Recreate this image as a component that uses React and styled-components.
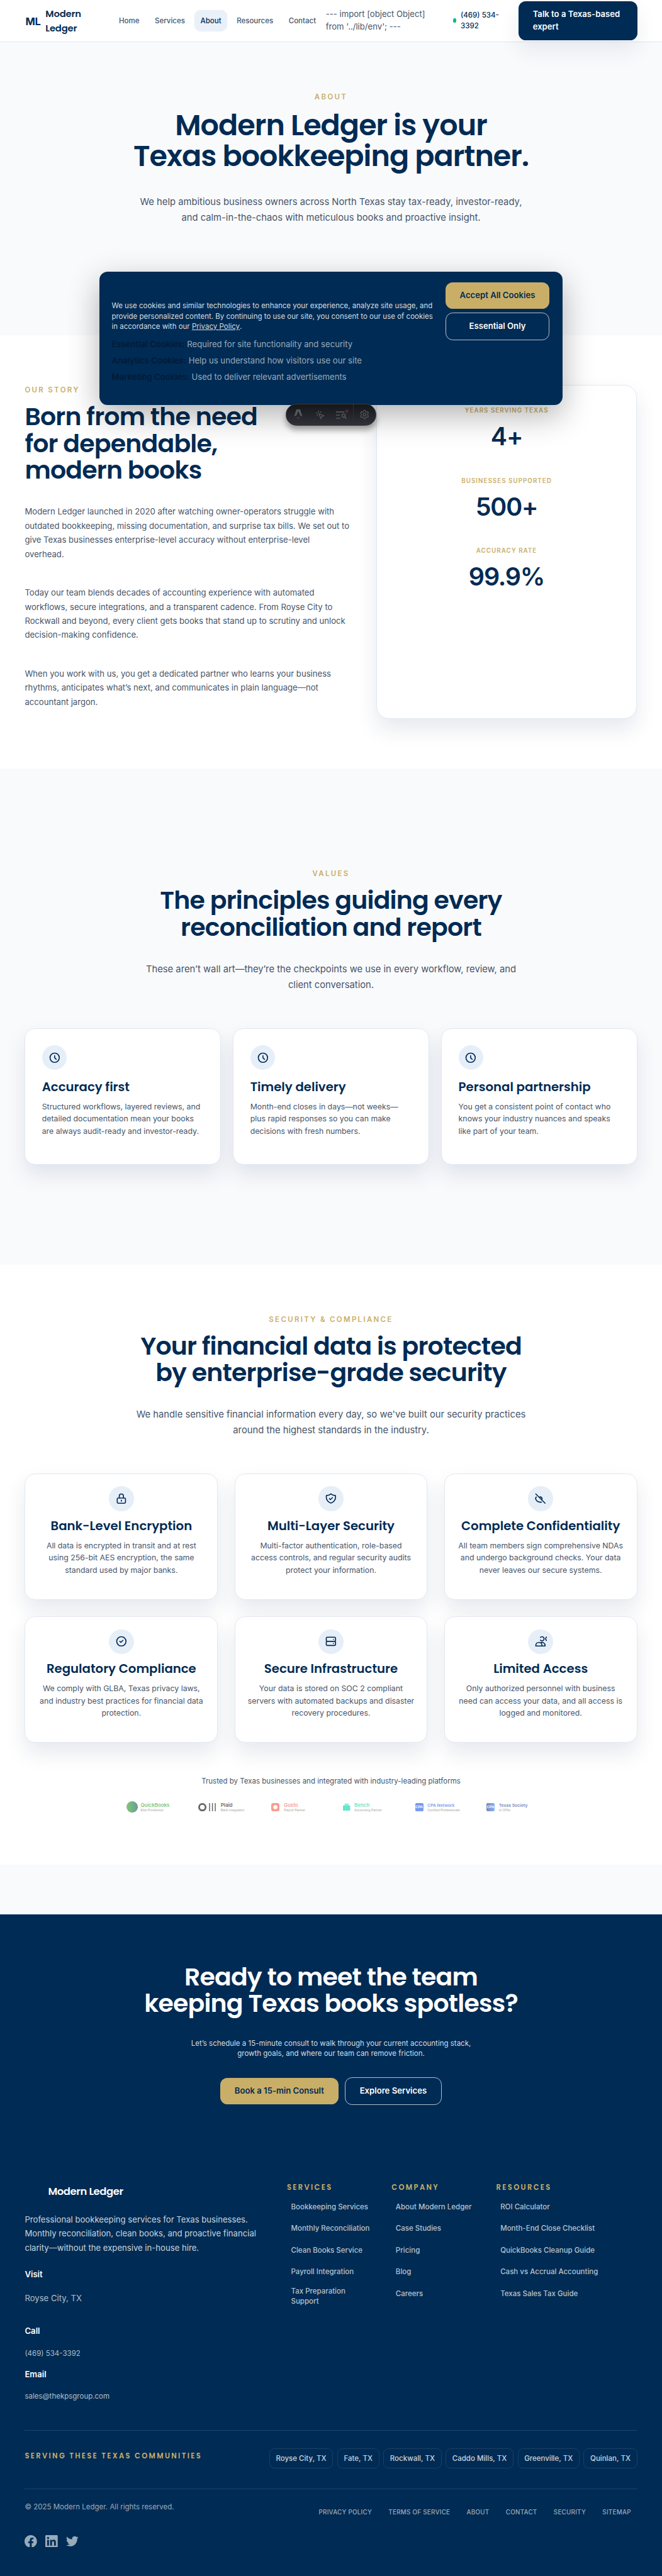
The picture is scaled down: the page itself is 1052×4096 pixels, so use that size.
import React from "react";
import styled, { createGlobalStyle } from "styled-components";
import { MousePointerClick, Settings } from "lucide-react";

const navy = "#002b54";
const gold = "#c9ae68";
const slate = "#475569";
const line = "#e2e8f0";
const mist = "#f9fafc";
const body = `Inter, "Liberation Sans", sans-serif`;
const display = `Poppins, Inter, sans-serif`;

const Global = createGlobalStyle`
  * { box-sizing: border-box; }
  body { margin: 0; background: ${navy}; }
  h1, h2, h3, p, ul { margin: 0; padding: 0; }
  a { color: inherit; text-decoration: none; }
  svg { display: block; flex: none; }
`;

const Page = styled.div`
  position: relative;
  zoom: 0.8215;
  height: 4986px;
  overflow: hidden;
  font-family: ${body};
  font-size: 16px;
  line-height: 24px;
  color: ${slate};
  background: ${mist};
`;

/* Header */
const Header = styled.header`
  display: flex;
  align-items: center;
  height: 81px;
  padding: 0 48px;
  background: #fff;
  border-bottom: 1px solid ${line};
`;
const Brand = styled.a`
  display: flex;
  align-items: center;
  gap: 8px;
  width: 170px;
  color: ${navy};
`;
const Mark = styled.span`
  display: flex;
  align-items: center;
  justify-content: center;
  width: 32px;
  height: 32px;
  padding-top: 3px;
  font: 700 20px/20px ${body};
  letter-spacing: -0.02em;
  border-radius: 8px;
  box-shadow: 0 1px 2px rgba(0, 43, 84, 0.06);
`;
const BrandName = styled.span`
  width: 80px;
  font: 600 18px/28px ${display};
  letter-spacing: -0.01em;
`;
const Nav = styled.nav`
  display: flex;
  gap: 6px;
`;
const NavLink = styled.a`
  padding: 10px 12px;
  font-size: 14px;
  line-height: 20px;
  font-weight: 500;
  border-radius: 12px;
  color: ${(p) => (p.$active ? navy : slate)};
  background: ${(p) => (p.$active ? "#e9f0f9" : "transparent")};
  box-shadow: ${(p) => (p.$active ? "0 1px 2px rgba(0,43,84,.08)" : "none")};
`;
const EnvNote = styled.span`
  flex: none;
  width: 253px;
  padding: 1px 0 0 7px;
  white-space: pre-line;
`;
const Phone = styled.a`
  display: flex;
  align-items: center;
  gap: 8px;
  white-space: pre;
  font-size: 14px;
  line-height: 20px;
  font-weight: 500;
  color: ${navy};
`;
const Dot = styled.i`
  width: 7px;
  height: 8px;
  border-radius: 50%;
  background: #10b981;
`;
const HeaderCta = styled.a`
  flex: none;
  width: 230px;
  margin-left: auto;
  padding: 14px 28px;
  white-space: pre-line;
  font-weight: 600;
  color: #fff;
  background: ${navy};
  border-radius: 14px;
  box-shadow: 0 20px 40px rgba(0, 43, 84, 0.08);
`;

/* Section type */
const Section = styled.section`
  height: ${(p) => p.$h}px;
  padding: ${(p) => p.$top}px 48px 0;
  background: ${(p) => p.$bg};
  text-align: ${(p) => (p.$center ? "center" : "left")};
`;
const Eyebrow = styled.p`
  font-size: 14px;
  line-height: 20px;
  font-weight: 600;
  letter-spacing: 0.2em;
  text-transform: uppercase;
  color: ${gold};
`;
const Title = styled.h1`
  margin-top: 15.5px;
  white-space: pre-line;
  font: 600 56px/58.8px ${display};
  letter-spacing: -0.02em;
  color: ${navy};
`;
const Heading = styled.h2`
  margin-top: ${(p) => p.$mt ?? 16}px;
  white-space: pre-line;
  font: 600 48px/51.8px ${display};
  letter-spacing: -0.02em;
  color: ${(p) => (p.$light ? "#fff" : navy)};
`;
const Lead = styled.p`
  margin-top: ${(p) => p.$mt ?? 40.5}px;
  white-space: pre-line;
  font-size: 18px;
  line-height: 30.6px;
`;

/* Story */
const StoryGrid = styled.div`
  display: grid;
  grid-template-columns: 632px 504px;
  gap: 48px;
  height: 646.6px;
`;
const StoryText = styled.div`
  display: flex;
  flex-direction: column;
  gap: 48px;
  margin-top: 39.5px;
  white-space: pre-line;
  line-height: 27.2px;
`;
const StatCard = styled.aside`
  border: 1px solid ${line};
  border-radius: 24px;
  padding-top: 37.5px;
  background: #fff;
  box-shadow: 0 20px 40px rgba(0, 43, 84, 0.1);
  text-align: center;
`;
const Stat = styled.div`
  height: 136px;
`;
const StatLabel = styled.p`
  font-size: 12px;
  line-height: 20px;
  font-weight: 600;
  letter-spacing: 0.1em;
  color: ${gold};
`;
const StatValue = styled.p`
  margin-top: 2px;
  font-size: 48px;
  line-height: 80px;
  font-weight: 600;
  letter-spacing: -0.03em;
  color: ${navy};
`;

/* Cards */
const CardGrid = styled.div`
  display: grid;
  grid-template-columns: repeat(3, 1fr);
  gap: ${(p) => p.$gap}px;
  margin-top: ${(p) => p.$mt}px;
`;
const Card = styled.article`
  display: flex;
  flex-direction: column;
  align-items: ${(p) => (p.$center ? "center" : "flex-start")};
  text-align: ${(p) => (p.$center ? "center" : "left")};
  height: ${(p) => (p.$center ? 244.5 : 264.3)}px;
  padding: ${(p) => (p.$center ? 24 : 32)}px;
  border: 1px solid ${line};
  border-radius: 20px;
  background: #fff;
  box-shadow: 0 20px 40px rgba(0, 43, 84, 0.1);
`;
const IconDisc = styled.span`
  display: grid;
  place-items: center;
  width: 48px;
  height: 48px;
  border-radius: 50%;
  background: #e6eef8;
  color: ${navy};
`;
const CardTitle = styled.h3`
  margin-top: ${(p) => p.$mt}px;
  font: 600 24px/30px ${display};
  white-space: nowrap;
  color: ${navy};
`;
const CardText = styled.p`
  margin-top: 11px;
  white-space: pre;
  font-size: 15px;
  line-height: 24px;
`;

/* Partners */
const Trusted = styled.p`
  margin-top: 65px;
  font-size: 14px;
  line-height: 20px;
`;
const PartnerRow = styled.div`
  display: grid;
  grid-template-columns: repeat(6, 138.5px);
  justify-content: start;
  margin: 29px 0 0 ${245 - 48}px;
`;
const Partner = styled.div`
  display: flex;
  align-items: center;
  gap: ${(p) => p.$gap}px;
  margin-left: ${(p) => p.$ml ?? 0}px;
  height: 22px;
  text-align: left;
  opacity: 0.6;
`;
const PartnerName = styled.b`
  display: block;
  white-space: nowrap;
  font-size: ${(p) => p.$size}px;
  line-height: 11px;
  font-weight: 600;
  color: ${(p) => p.$color};
`;
const PartnerRole = styled.small`
  display: block;
  white-space: nowrap;
  font: 6.3px/8px "Liberation Sans", sans-serif;
  color: #666;
`;
const CpaBadge = styled.span`
  display: grid;
  place-items: center;
  width: 16px;
  height: 16px;
  border-radius: 2px;
  font: 700 7px/8px "Liberation Sans", sans-serif;
  color: #fff;
  background: ${(p) => p.$bg};
`;

/* Call to action */
const CtaText = styled.p`
  margin-top: 40.500px;
  white-space: pre-line;
  font-size: 14px;
  line-height: 20px;
  color: rgba(255, 255, 255, 0.85);
`;
const ButtonRow = styled.div`
  display: flex;
  align-items: center;
  justify-content: center;
  gap: 12px;
  margin-top: 36px;
`;
const Button = styled.a`
  display: flex;
  align-items: center;
  justify-content: center;
  height: ${(p) => (p.$outline ? 53 : 51.5)}px;
  padding: 0 28px;
  border-radius: 14px;
  font-weight: 600;
  white-space: nowrap;
  color: ${(p) => (p.$outline ? "#fff" : navy)};
  background: ${(p) => (p.$outline ? "transparent" : gold)};
  border: ${(p) => (p.$outline ? "1px solid rgba(255,255,255,.7)" : "0")};
`;

/* Footer */
const Footer = styled.footer`
  height: 806px;
  padding: 43.5px 48px 0;
  background: ${navy};
  color: rgba(255, 255, 255, 0.8);
`;
const FooterGrid = styled.div`
  display: grid;
  grid-template-columns: 507px 202.5px 202.5px 1fr;
  height: 480.5px;
`;
const FooterBrand = styled.p`
  margin: 4.4px 0 26.5px;
  padding-left: 45px;
  font: 600 20px/28px ${display};
  letter-spacing: -0.025em;
  color: #fff;
`;
const FooterAbout = styled.p`
  white-space: pre-line;
  line-height: 27.2px;
`;
const ContactLabel = styled.p`
  margin-top: ${(p) => p.$mt}px;
  line-height: 20px;
  font-weight: 600;
  color: #fff;
`;
const ContactValue = styled.p`
  margin-top: ${(p) => p.$mt}px;
  font-size: ${(p) => p.$size}px;
  line-height: 20px;
  color: rgba(255, 255, 255, 0.7);
`;
const FooterLabel = styled.p`
  font: 600 14px/20px ${display};
  letter-spacing: 0.205em;
  color: ${gold};
`;
const LinkList = styled.ul`
  display: flex;
  flex-direction: column;
  gap: 6px;
  margin-top: 10px;
  list-style: none;
`;
const LinkItem = styled.li`
  display: flex;
  align-items: center;
  min-height: 36px;
  padding: 3px 8px;
  white-space: pre-line;
  font-size: 14px;
  line-height: 20px;
  font-weight: 500;
  color: rgba(255, 255, 255, 0.72);
`;
const Communities = styled.div`
  display: flex;
  justify-content: space-between;
  height: 113px;
  padding-top: 33px;
  border-top: 1px solid rgba(255, 255, 255, 0.12);
`;
const CommunityLabel = styled(FooterLabel)`
  margin-top: 6px;
`;
const Towns = styled.div`
  display: flex;
  gap: 8px;
`;
const Town = styled.span`
  height: 39.5px;
  padding: 9px 11.7px;
  border: 1px solid rgba(255, 255, 255, 0.1);
  border-radius: 10px;
  font-size: 14px;
  line-height: 20px;
  font-weight: 500;
`;
const Legal = styled.div`
  display: flex;
  justify-content: space-between;
  padding-top: 24px;
  border-top: 1px solid rgba(255, 255, 255, 0.12);
  font-size: 14px;
  line-height: 20px;
  color: rgba(255, 255, 255, 0.6);
`;
const LegalLinks = styled.nav`
  display: flex;
  gap: 8px;
  margin-top: 10px;
  font-size: 12px;
  font-weight: 500;
  letter-spacing: 0.025em;
  text-transform: uppercase;
  a { padding: 0 12px; }
`;
const Social = styled.div`
  display: flex;
  gap: 16px;
  margin-top: 34px;
  color: rgba(255, 255, 255, 0.6);
`;

/* Floating layers */
const Banner = styled.div`
  position: absolute;
  top: 526px;
  left: 192px;
  width: 896px;
  height: 258px;
  display: flex;
  justify-content: space-between;
  padding: 20px 25px 0 24px;
  border-radius: 16px;
  background: ${navy};
  box-shadow: 0 20px 60px rgba(0, 0, 0, 0.3);
`;
const BannerCopy = styled.div`
  padding-top: 36px;
`;
const BannerText = styled.p`
  font-size: 14px;
  line-height: 20px;
  color: rgba(255, 255, 255, 0.85);
  a { text-decoration: underline; }
`;
const BannerLine = styled.span`
  display: flex;
  white-space: pre;
`;
const CookieTypes = styled.ul`
  margin-top: 9.5px;
  list-style: none;
  line-height: 31.4px;
  color: rgba(255, 255, 255, 0.6);
  b { font-weight: 600; color: #021a38; }
`;
const BannerActions = styled.div`
  display: flex;
  flex-direction: column;
  gap: 8px;
  width: 201.5px;
`;
const DevBar = styled.div`
  position: absolute;
  top: 782px;
  left: 552.5px;
  width: 175px;
  height: 42px;
  display: flex;
  align-items: center;
  border-radius: 21px;
  border: 1px solid #3a3c44;
  color: #56575b;
  background: linear-gradient(#14161a, #313238);
  box-shadow: 0 8px 12px rgba(0, 0, 0, 0.35);
`;
const Tool = styled.span`
  display: grid;
  place-items: center;
  width: ${(p) => p.$w}px;
  height: 40px;
  border-left: ${(p) => (p.$rule ? "2px solid #2f3036" : "0")};
`;

const icons = {
  clock: "M12 8v4l3 3m6-3a9 9 0 11-18 0 9 9 0 0118 0z",
  lock: "M12 15v2m-6 4h12a2 2 0 002-2v-6a2 2 0 00-2-2H6a2 2 0 00-2 2v6a2 2 0 002 2zm10-10V7a4 4 0 00-8 0v4h8z",
  shield: "M9 12l2 2 4-4m5.618-4.016A11.955 11.955 0 0112 2.944a11.955 11.955 0 01-8.618 3.04A12.02 12.02 0 003 9c0 5.591 3.824 10.29 9 11.622 5.176-1.332 9-6.03 9-11.622 0-1.042-.133-2.052-.382-3.016z",
  hidden: "M13.875 18.825A10.05 10.05 0 0112 19c-4.478 0-8.268-2.943-9.543-7a9.97 9.97 0 011.563-3.029m5.858.908a3 3 0 114.243 4.243M3 3l18 18",
  check: "M9 12l2 2 4-4m6 2a9 9 0 11-18 0 9 9 0 0118 0z",
  server: "M5 12h14M5 12a2 2 0 01-2-2V6a2 2 0 012-2h14a2 2 0 012 2v4a2 2 0 01-2 2M5 12a2 2 0 00-2 2v4a2 2 0 002 2h14a2 2 0 002-2v-4a2 2 0 00-2-2m-2-4h.01M17 16h.01",
  people: "M12 4.354a4 4 0 110 5.292M15 21H3v-1a6 6 0 0112 0v1zm0 0h6v-1a6 6 0 00-9-5.197M24 3.6a4 4 0 000 6.8",
};
const social = [
  "M24 12.073c0-6.627-5.373-12-12-12s-12 5.373-12 12c0 5.99 4.388 10.954 10.125 11.854v-8.385H7.078v-3.47h3.047V9.43c0-3.007 1.792-4.669 4.533-4.669 1.312 0 2.686.235 2.686.235v2.953H15.83c-1.491 0-1.956.925-1.956 1.874v2.25h3.328l-.532 3.47h-2.796v8.385C19.612 23.027 24 18.062 24 12.073z",
  "M20.447 20.452h-3.554v-5.569c0-1.328-.027-3.037-1.852-3.037-1.853 0-2.136 1.445-2.136 2.939v5.667H9.351V9h3.414v1.561h.046c.477-.9 1.637-1.85 3.37-1.85 3.601 0 4.267 2.37 4.267 5.455v6.286zM5.337 7.433c-1.144 0-2.063-.926-2.063-2.065 0-1.138.92-2.063 2.063-2.063 1.14 0 2.064.925 2.064 2.063 0 1.139-.925 2.065-2.064 2.065zm1.782 13.019H3.555V9h3.564v11.452zM22.225 0H1.771C.792 0 0 .774 0 1.729v20.542C0 23.227.792 24 1.771 24h20.451C23.2 24 24 23.227 24 22.271V1.729C24 .774 23.2 0 22.222 0h.003z",
  "M23.953 4.57a10 10 0 01-2.825.775 4.958 4.958 0 002.163-2.723c-.951.555-2.005.959-3.127 1.184a4.92 4.92 0 00-8.384 4.482C7.69 8.095 4.067 6.13 1.64 3.162a4.822 4.822 0 00-.666 2.475c0 1.71.87 3.213 2.188 4.096a4.904 4.904 0 01-2.228-.616v.06a4.923 4.923 0 003.946 4.827 4.996 4.996 0 01-2.212.085 4.936 4.936 0 004.604 3.417 9.867 9.867 0 01-6.102 2.105c-.39 0-.779-.023-1.17-.067a13.995 13.995 0 007.557 2.209c9.053 0 13.998-7.496 13.998-13.985 0-.21 0-.42-.015-.63A9.935 9.935 0 0024 4.59z",
];

const Icon = ({ name }) => (
  <svg width="24" height="24" viewBox="0 0 24 24" fill="none" stroke="currentColor" strokeWidth="2" strokeLinecap="round" strokeLinejoin="round">
    <path d={icons[name]} />
  </svg>
);

const values = [
  ["Accuracy first", "Structured workflows, layered reviews, and\ndetailed documentation mean your books\nare always audit-ready and investor-ready."],
  ["Timely delivery", "Month-end closes in days—not weeks—\nplus rapid responses so you can make\ndecisions with fresh numbers."],
  ["Personal partnership", "You get a consistent point of contact who\nknows your industry nuances and speaks\nlike part of your team."],
];
const safeguards = [
  ["lock", "Bank-Level Encryption", "All data is encrypted in transit and at rest\nusing 256-bit AES encryption, the same\nstandard used by major banks."],
  ["shield", "Multi-Layer Security", "Multi-factor authentication, role-based\naccess controls, and regular security audits\nprotect your information."],
  ["hidden", "Complete Confidentiality", "All team members sign comprehensive NDAs\nand undergo background checks. Your data\nnever leaves our secure systems."],
  ["check", "Regulatory Compliance", "We comply with GLBA, Texas privacy laws,\nand industry best practices for financial data\nprotection."],
  ["server", "Secure Infrastructure", "Your data is stored on SOC 2 compliant\nservers with automated backups and disaster\nrecovery procedures."],
  ["people", "Limited Access", "Only authorized personnel with business\nneed can access your data, and all access is\nlogged and monitored."],
];
const linkColumns = [
  ["SERVICES", ["Bookkeeping Services", "Monthly Reconciliation", "Clean Books Service", "Payroll Integration", "Tax Preparation\nSupport"]],
  ["COMPANY", ["About Modern Ledger", "Case Studies", "Pricing", "Blog", "Careers"]],
  ["RESOURCES", ["ROI Calculator", "Month-End Close Checklist", "QuickBooks Cleanup Guide", "Cash vs Accrual Accounting", "Texas Sales Tax Guide"]],
];
const towns = ["Royse City, TX", "Fate, TX", "Rockwall, TX", "Caddo Mills, TX", "Greenville, TX", "Quinlan, TX"];
const legal = ["Privacy Policy", "Terms of Service", "About", "Contact", "Security", "Sitemap"];

const PartnerLabel = ({ name, role, color, size = 9.7 }) => (
  <div>
    <PartnerName $color={color} $size={size}>{name}</PartnerName>
    <PartnerRole>{role}</PartnerRole>
  </div>
);

export default function App() {
  return (
    <>
      <Global />
      <Page>
        <Header>
          <Brand>
            <Mark>ML</Mark>
            <BrandName>Modern Ledger</BrandName>
          </Brand>
          <Nav>
            {["Home", "Services", "About", "Resources", "Contact"].map((n) => (
              <NavLink key={n} $active={n === "About"}>{n}</NavLink>
            ))}
          </Nav>
          <EnvNote>{"--- import [object Object]\nfrom '../lib/env'; ---"}</EnvNote>
          <Phone><Dot />{"(469) 534-\n3392"}</Phone>
          <HeaderCta>{"Talk to a Texas-based\nexpert"}</HeaderCta>
        </Header>

        <Section $h={567.7} $top={97} $bg={mist} $center>
          <Eyebrow>About</Eyebrow>
          <Title>{"Modern Ledger is your\nTexas bookkeeping partner."}</Title>
          <Lead $mt={45}>{"We help ambitious business owners across North Texas stay tax-ready, investor-ready,\nand calm-in-the-chaos with meticulous books and proactive insight."}</Lead>
        </Section>

        <Section $h={839} $top={96.3} $bg="#fff">
          <StoryGrid>
            <div>
              <Eyebrow>Our Story</Eyebrow>
              <Heading $mt={17}>{"Born from the need\nfor dependable,\nmodern books"}</Heading>
              <StoryText>
                <p>{"Modern Ledger launched in 2020 after watching owner-operators struggle with\noutdated bookkeeping, missing documentation, and surprise tax bills. We set out to\ngive Texas businesses enterprise-level accuracy without enterprise-level\noverhead."}</p>
                <p>{"Today our team blends decades of accounting experience with automated\nworkflows, secure integrations, and a transparent cadence. From Royse City to\nRockwall and beyond, every client gets books that stand up to scrutiny and unlock\ndecision-making confidence."}</p>
                <p>{"When you work with us, you get a dedicated partner who learns your business\nrhythms, anticipates what’s next, and communicates in plain language—not\naccountant jargon."}</p>
              </StoryText>
            </div>
            <StatCard>
              {[["YEARS SERVING TEXAS", "4+"], ["BUSINESSES SUPPORTED", "500+"], ["ACCURACY RATE", "99.9%"]].map(([l, v]) => (
                <Stat key={l}>
                  <StatLabel>{l}</StatLabel>
                  <StatValue>{v}</StatValue>
                </Stat>
              ))}
            </StatCard>
          </StoryGrid>
        </Section>

        <Section $h={960.5} $top={193.9} $bg={mist} $center>
          <Eyebrow>Values</Eyebrow>
          <Heading>{"The principles guiding every\nreconciliation and report"}</Heading>
          <Lead>{"These aren’t wall art—they’re the checkpoints we use in every workflow, review, and\nclient conversation."}</Lead>
          <CardGrid $gap={24} $mt={66.9}>
            {values.map(([t, d]) => (
              <Card key={t}>
                <IconDisc><Icon name="clock" /></IconDisc>
                <CardTitle $mt={18}>{t}</CardTitle>
                <CardText>{d}</CardText>
              </Card>
            ))}
          </CardGrid>
        </Section>

        <Section $h={1161} $top={96} $bg="#fff" $center>
          <Eyebrow>Security &amp; Compliance</Eyebrow>
          <Heading>{"Your financial data is protected\nby enterprise-grade security"}</Heading>
          <Lead $mt={39}>{"We handle sensitive financial information every day, so we've built our security practices\naround the highest standards in the industry."}</Lead>
          <CardGrid $gap={32} $mt={67.9}>
            {safeguards.map(([i, t, d]) => (
              <Card key={t} $center>
                <IconDisc><Icon name={i} /></IconDisc>
                <CardTitle $mt={13.5}>{t}</CardTitle>
                <CardText>{d}</CardText>
              </Card>
            ))}
          </CardGrid>
          <Trusted>Trusted by Texas businesses and integrated with industry-leading platforms</Trusted>
          <PartnerRow>
            <Partner $gap={5}>
              <svg width="22" height="22" viewBox="0 0 22 22">
                <defs><linearGradient id="qb"><stop offset="0" stopColor="#2ca01c" /><stop offset="1" stopColor="#0a5f4e" /></linearGradient></defs>
                <circle cx="11" cy="11" r="11" fill="url(#qb)" />
              </svg>
              <PartnerLabel name="QuickBooks" role="Elite ProAdvisor" color="#2ca01c" />
            </Partner>
            <Partner $gap={8} $ml={0.5}>
              <svg width="35" height="16" viewBox="0 0 35 16" fill="none" stroke="#000">
                <circle cx="8" cy="8" r="6.3" strokeWidth="3.4" />
                <path d="M22 0v16M27.5 0v16M33 0v16" strokeWidth="1.8" />
              </svg>
              <PartnerLabel name="Plaid" role="Bank Integration" color="#000" />
            </Partner>
            <Partner $gap={8} $ml={3}>
              <svg width="16" height="16" viewBox="0 0 16 16">
                <rect width="16" height="16" rx="4" fill="#f45d48" />
                <circle cx="8" cy="8" r="4" fill="#fff" />
              </svg>
              <PartnerLabel name="Gusto" role="Payroll Partner" color="#f45d48" />
            </Partner>
            <Partner $gap={8} $ml={3}>
              <svg width="14" height="14" viewBox="0 0 14 14" fill="#00d4aa">
                <rect x="3" width="8" height="2" rx="1" />
                <rect y="3" width="14" height="11" rx="2" />
              </svg>
              <PartnerLabel name="Bench" role="Accounting Partner" color="#00d4aa" />
            </Partner>
            <Partner $gap={8} $ml={4}>
              <CpaBadge $bg="#1e5ae6">CPA</CpaBadge>
              <PartnerLabel name="CPA Network" role="Certified Professionals" color="#1e5ae6" size={8.2} />
            </Partner>
            <Partner $gap={8} $ml={3.5}>
              <CpaBadge $bg="linear-gradient(90deg,#1e3a8a,#3b82f6)">CPA</CpaBadge>
              <PartnerLabel name="Texas Society" role="of CPAs" color="#1e3a8a" size={8.3} />
            </Partner>
          </PartnerRow>
        </Section>

        <Section $h={96} $top={0} $bg={mist} />

        <Section $h={475} $top={96} $bg={navy} $center>
          <Heading $mt={0} $light>{"Ready to meet the team\nkeeping Texas books spotless?"}</Heading>
          <CtaText>{"Let’s schedule a 15-minute consult to walk through your current accounting stack,\ngrowth goals, and where our team can remove friction."}</CtaText>
          <ButtonRow>
            <Button>Book a 15-min Consult</Button>
            <Button $outline>Explore Services</Button>
          </ButtonRow>
        </Section>

        <Footer>
          <FooterGrid>
            <div>
              <FooterBrand>Modern Ledger</FooterBrand>
              <FooterAbout>{"Professional bookkeeping services for Texas businesses.\nMonthly reconciliation, clean books, and proactive financial\nclarity—without the expensive in-house hire."}</FooterAbout>
              <ContactLabel $mt={27.5}>Visit</ContactLabel>
              <ContactValue $mt={27} $size={16}>Royse City, TX</ContactValue>
              <ContactLabel $mt={43}>Call</ContactLabel>
              <ContactValue $mt={24} $size={14}>(469) 534-3392</ContactValue>
              <ContactLabel $mt={20}>Email</ContactLabel>
              <ContactValue $mt={22.5} $size={14}>sales@thekpsgroup.com</ContactValue>
            </div>
            {linkColumns.map(([label, items]) => (
              <div key={label}>
                <FooterLabel>{label}</FooterLabel>
                <LinkList>
                  {items.map((t) => <LinkItem key={t}>{t}</LinkItem>)}
                </LinkList>
              </div>
            ))}
          </FooterGrid>
          <Communities>
            <CommunityLabel>SERVING THESE TEXAS COMMUNITIES</CommunityLabel>
            <Towns>{towns.map((t) => <Town key={t}>{t}</Town>)}</Towns>
          </Communities>
          <Legal>
            <span>© 2025 Modern Ledger. All rights reserved.</span>
            <LegalLinks>{legal.map((t) => <a key={t}>{t}</a>)}</LegalLinks>
          </Legal>
          <Social>
            {social.map((d) => (
              <svg key={d} width="24" height="24" viewBox="0 0 24 24" fill="currentColor"><path d={d} /></svg>
            ))}
          </Social>
        </Footer>

        <Banner>
          <BannerCopy>
            <BannerText>
              <BannerLine>We use cookies and similar technologies to enhance your experience, analyze site usage, and</BannerLine>
              <BannerLine>provide personalized content. By continuing to use our site, you consent to our use of cookies</BannerLine>
              <BannerLine>{"in accordance with our "}<a>Privacy Policy</a>.</BannerLine>
            </BannerText>
            <CookieTypes>
              <li><b>Essential Cookies:</b> Required for site functionality and security</li>
              <li><b>Analytics Cookies:</b> Help us understand how visitors use our site</li>
              <li><b>Marketing Cookies:</b> Used to deliver relevant advertisements</li>
            </CookieTypes>
          </BannerCopy>
          <BannerActions>
            <Button>Accept All Cookies</Button>
            <Button $outline>Essential Only</Button>
          </BannerActions>
        </Banner>

        <DevBar>
          <Tool $w={46}>
            <svg width="17" height="20" viewBox="0 0 17 20">
              <path d="M5 0h7l4.5 13.5-4.5-1.5L8.5 3 5 12 .5 13.5z" fill="#56575b" />
              <path d="M4.5 14.5h8L8.5 20z" fill="#4f2a4e" />
            </svg>
          </Tool>
          <Tool $w={40}><MousePointerClick size={19} strokeWidth={2} /></Tool>
          <Tool $w={44}>
            <svg width="26" height="20" viewBox="0 0 26 20" fill="none" stroke="currentColor" strokeWidth="2">
              <path d="M1 5h16M1 11h8M1 17h9" />
              <circle cx="16" cy="12" r="3.2" />
              <path d="M18 14.5l3 3.5" />
              <circle cx="22" cy="3.5" r="3.5" fill="#4d2533" stroke="none" />
            </svg>
          </Tool>
          <Tool $w={43} $rule><Settings size={20} strokeWidth={1.8} /></Tool>
        </DevBar>
      </Page>
    </>
  );
}
